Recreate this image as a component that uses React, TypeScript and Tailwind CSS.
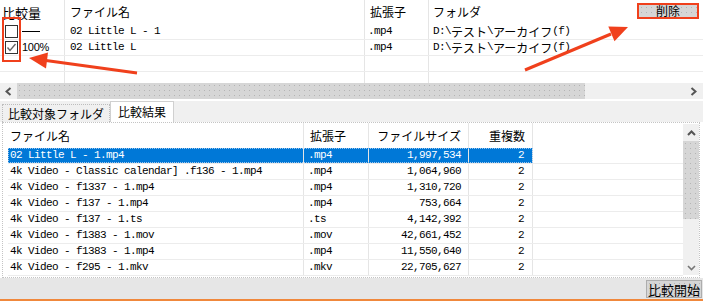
import React from 'react';

const RED = '#f0401c';

function Mixed({ text }: { text: string }) {
  const parts = text.match(/[\x00-\x7f]+|[^\x00-\x7f]+/g) ?? [];
  return (
    <>
      {parts.map((p, i) =>
        /^[\x00-\x7f]/.test(p) ? (
          <span key={i} className="font-['Liberation_Mono',monospace] text-[11px] tracking-[-0.6px] whitespace-pre">
            {p}
          </span>
        ) : (
          <span key={i} className="font-['Noto_Sans_CJK_JP',sans-serif] text-[12px] whitespace-pre">
            {p}
          </span>
        )
      )}
    </>
  );
}

function Checkbox({ checked }: { checked?: boolean }) {
  return (
    <svg width="13" height="13" viewBox="0 0 13 13" className="shrink-0">
      <rect x="0.5" y="0.5" width="12" height="12" fill="#fff" stroke="#333" />
      {checked && <polyline points="2.5,6.5 5,9.5 10.5,3" fill="none" stroke="#666" strokeWidth="1.4" />}
    </svg>
  );
}

const dotted =
  "bg-[#d6d6d6] bg-[radial-gradient(circle,#b4b4b4_0.7px,transparent_0.9px)] bg-[length:5px_5px]";

const topRows = [
  { checked: false, ratio: null as string | null, name: '02 Little L - 1', ext: '.mp4', folder: 'D:\\テスト\\アーカイフ(f)' },
  { checked: true, ratio: '100%', name: '02 Little L', ext: '.mp4', folder: 'D:\\テスト\\アーカイフ(f)' },
];

const results = [
  ['02 Little L - 1.mp4', '.mp4', '1,997,534', '2'],
  ['4k Video - Classic calendar] .f136 - 1.mp4', '.mp4', '1,064,960', '2'],
  ['4k Video - f1337 - 1.mp4', '.mp4', '1,310,720', '2'],
  ['4k Video - f137 - 1.mp4', '.mp4', '753,664', '2'],
  ['4k Video - f137 - 1.ts', '.ts', '4,142,392', '2'],
  ['4k Video - f1383 - 1.mov', '.mov', '42,661,452', '2'],
  ['4k Video - f1383 - 1.mp4', '.mp4', '11,550,640', '2'],
  ['4k Video - f295 - 1.mkv', '.mkv', '22,705,627', '2'],
];

export default function App() {
  const jp = "font-['Noto_Sans_CJK_JP',sans-serif] text-[12px] leading-none whitespace-nowrap";
  return (
    <div className="relative w-[703px] h-[301px] overflow-hidden bg-white text-black flex flex-col">
      {/* Top table */}
      <div className="h-[83px] shrink-0 flex flex-col overflow-hidden bg-white">
        <div className="h-[24px] flex shrink-0">
          <div className={`w-[65px] border-r border-[#e5e5e5] flex items-center pl-[2px] ${jp} text-[13px]`}>比較量</div>
          <div className={`w-[300px] border-r border-[#e5e5e5] flex items-center pl-[5px] ${jp}`}>ファイル名</div>
          <div className={`w-[64px] border-r border-[#e5e5e5] flex items-center pl-[5px] ${jp}`}>拡張子</div>
          <div className={`flex-1 flex items-start pl-[4px] ${jp}`}>
            <span className="mt-[6px]">フォルダ</span>
            <button className={`ml-auto mr-[4px] mt-[3px] w-[62px] h-[16px] border-2 border-[#f0401c] ${dotted} flex items-center justify-center ${jp}`}>
              削除
            </button>
          </div>
        </div>
        {topRows.map((r, i) => (
          <div key={i} className="h-[16px] flex shrink-0 border-b border-[#ececec]">
            <div className="w-[65px] border-r border-[#e5e5e5] flex items-center pl-[5px] gap-[4px]">
              <Checkbox checked={r.checked} />
              {r.ratio ? (
                <span className="font-['Liberation_Sans',sans-serif] text-[11px] tracking-[-0.3px]">{r.ratio}</span>
              ) : (
                <span className="w-[18px] h-px bg-black" />
              )}
            </div>
            <div className="w-[300px] border-r border-[#e5e5e5] flex items-center pl-[5px]">
              <Mixed text={r.name} />
            </div>
            <div className="w-[64px] border-r border-[#e5e5e5] flex items-center pl-[3px]">
              <Mixed text={r.ext} />
            </div>
            <div className="flex-1 flex items-center pl-[4px]">
              <Mixed text={r.folder} />
            </div>
          </div>
        ))}
        {[0, 1].map((i) => (
          <div key={i} className="h-[16px] flex shrink-0 border-b border-[#ececec]">
            <div className="w-[65px] border-r border-[#e5e5e5]" />
            <div className="w-[300px] border-r border-[#e5e5e5]" />
            <div className="w-[64px] border-r border-[#e5e5e5]" />
            <div className="flex-1" />
          </div>
        ))}
      </div>

      {/* Horizontal scrollbar */}
      <div className="h-[16px] flex bg-[#f0f0f0] shrink-0">
        <div className="w-[17px] flex items-center justify-center">
          <svg width="7" height="9" viewBox="0 0 7 9">
            <polyline points="5.5,1 1.5,4.5 5.5,8" fill="none" stroke="#555" strokeWidth="2" />
          </svg>
        </div>
        <div className={`w-[568px] h-full ${dotted}`} />
        <div className="flex-1 flex items-center justify-end pr-[6px]">
          <svg width="7" height="9" viewBox="0 0 7 9">
            <polyline points="1.5,1 5.5,4.5 1.5,8" fill="none" stroke="#555" strokeWidth="2" />
          </svg>
        </div>
      </div>

      {/* Tabs */}
      <div className="h-[23px] shrink-0 flex items-end bg-[#f0f0f0] border-t-2 border-white pl-[2px]">
        <div className={`h-[18px] px-[5px] border border-b-0 border-dotted border-[#bdbdbd] bg-[#f0f0f0] flex items-center ${jp}`}>
          比較対象フォルダ
        </div>
        <div className={`h-[21px] px-[7px] border border-b-0 border-[#d0d0d0] bg-white flex items-center ${jp}`}>
          比較結果
        </div>
      </div>

      {/* Result panel */}
      <div className="h-[156px] shrink-0 ml-[2px] mr-[3px] border border-dotted border-[#c4c4c4] bg-white flex pl-[5px]">
        <div className="w-[675px] flex flex-col">
          <div className="h-[25px] flex shrink-0">
            <div className={`w-[296px] border-r border-[#e5e5e5] flex items-center pl-[2px] ${jp}`}>ファイル名</div>
            <div className={`w-[65px] border-r border-[#e5e5e5] flex items-center pl-[6px] ${jp}`}>拡張子</div>
            <div className={`w-[100px] border-r border-[#e5e5e5] flex items-center justify-end pr-[7px] ${jp}`}>ファイルサイズ</div>
            <div className={`w-[64px] border-r border-[#e5e5e5] flex items-center justify-end pr-[7px] ${jp}`}>重複数</div>
            <div className="flex-1" />
          </div>
          {results.map((r, i) => {
            const sel = i === 0;
            return (
              <div key={i} className="h-[16px] flex shrink-0 border-b border-[#ececec]">
                <div
                  className={`w-[525px] flex ${
                    sel ? 'bg-[#0078d7] text-white outline outline-1 outline-dotted outline-[#9cc6ee] -outline-offset-1' : ''
                  }`}
                >
                  <div className="w-[296px] border-r border-[#e5e5e5] flex items-center pl-[2px] overflow-hidden">
                    <Mixed text={r[0]} />
                  </div>
                  <div className="w-[65px] border-r border-[#e5e5e5] flex items-center pl-[4px]">
                    <Mixed text={r[1]} />
                  </div>
                  <div className="w-[100px] border-r border-[#e5e5e5] flex items-center justify-end pr-[7px]">
                    <Mixed text={r[2]} />
                  </div>
                  <div className="w-[64px] border-r border-[#e5e5e5] flex items-center justify-end pr-[8px]">
                    <Mixed text={r[3]} />
                  </div>
                </div>
                <div className="flex-1" />
              </div>
            );
          })}
        </div>
        {/* vertical scrollbar */}
        <div className="w-[16px] mt-[1px] mb-[2px] bg-[#f0f0f0] flex flex-col">
          <div className="h-[17px] flex items-center justify-center">
            <svg width="9" height="6" viewBox="0 0 9 6">
              <polyline points="1,5 4.5,1.5 8,5" fill="none" stroke="#555" strokeWidth="2" />
            </svg>
          </div>
          <div className={`h-[78px] ${dotted}`} />
          <div className="flex-1 flex items-end justify-center pb-[4px]">
            <svg width="9" height="6" viewBox="0 0 9 6">
              <polyline points="1,1 4.5,4.5 8,1" fill="none" stroke="#777" strokeWidth="1.6" />
            </svg>
          </div>
        </div>
      </div>

      {/* Status bar */}
      <div className="h-[21px] shrink-0 bg-[#e6e6e6] flex items-center justify-end pr-[1px] pt-[1px]">
        <button
          className={`w-[56px] h-[18px] border border-[#adadad] ${dotted} flex items-center justify-center font-['Noto_Sans_CJK_JP',sans-serif] text-[13px] leading-none whitespace-nowrap`}
        >
          比較開始
        </button>
      </div>
      <div className="flex-1 bg-[#f0883c]" />

      {/* Annotations */}
      <div className="absolute left-[2px] top-[17px] w-[19px] h-[45px] border-2 border-[#f0401c] pointer-events-none" />
      <svg className="absolute inset-0 pointer-events-none" width="703" height="301" viewBox="0 0 703 301">
        <line x1="137" y1="73" x2="46" y2="60.5" stroke={RED} strokeWidth="3" />
        <polygon points="29,58 48,52.5 46,68.5" fill={RED} />
        <line x1="525" y1="70" x2="611" y2="34" stroke={RED} strokeWidth="3" />
        <polygon points="628,27 614.5,41.3 608.3,26.5" fill={RED} />
      </svg>
    </div>
  );
}
